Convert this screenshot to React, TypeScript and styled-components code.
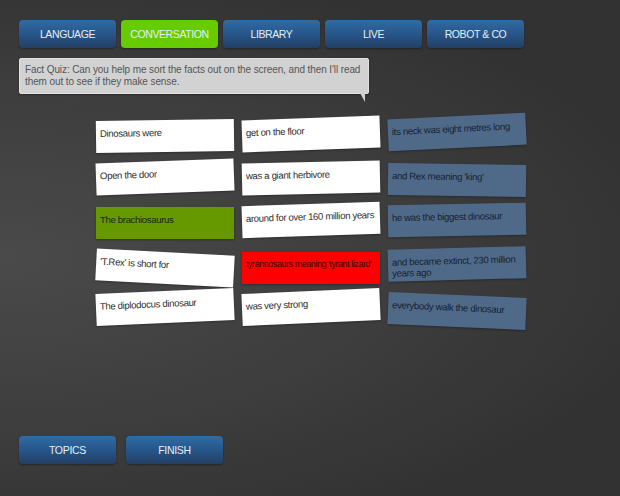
import React from "react";
import styled, { createGlobalStyle } from "styled-components";

const GlobalStyle = createGlobalStyle`
  html, body {
    margin: 0;
    padding: 0;
  }
  body {
    font-family: "Liberation Sans", Arial, sans-serif;
    background: #3a3a3a;
  }
`;

type Kind = "plain" | "right" | "wrong" | "answer";

interface ICard {
  text: string;
  kind: Kind;
  tilt: number;
  shift?: number;
}

const TABS = ["LANGUAGE", "CONVERSATION", "LIBRARY", "LIVE", "ROBOT & CO"];

// row by row, three columns
const CARDS: ICard[] = [
  { text: "Dinosaurs were", kind: "plain", tilt: -0.8, shift: 2 },
  { text: "get on the floor", kind: "plain", tilt: -2, shift: 0 },
  { text: "its neck was eight metres long", kind: "answer", tilt: -2.8, shift: -2 },

  { text: "Open the door", kind: "plain", tilt: -2, shift: 0 },
  { text: "was a giant herbivore", kind: "plain", tilt: -1.2, shift: 1 },
  { text: "and Rex meaning 'king'", kind: "answer", tilt: 0.8, shift: 3 },

  { text: "The brachiosaurus", kind: "right", tilt: 0, shift: 3 },
  { text: "around for over 160 million years", kind: "plain", tilt: -1.8, shift: 0 },
  { text: "he was the biggest dinosaur", kind: "answer", tilt: -1, shift: 0 },

  { text: "'T.Rex' is short for", kind: "plain", tilt: 3, shift: 5 },
  { text: "tyrannosaurs meaning 'tyrant lizard'", kind: "wrong", tilt: 0, shift: 5 },
  { text: "and became extinct, 230 million years ago", kind: "answer", tilt: -1.5, shift: 1 },

  { text: "The diplodocus dinosaur", kind: "plain", tilt: -2.5, shift: 1 },
  { text: "was very strong", kind: "plain", tilt: -2.5, shift: 1 },
  { text: "everybody walk the dinosaur", kind: "answer", tilt: 2.5, shift: 5 },
];

function App() {
  return (
    <>
      <GlobalStyle />
      <Page>
        <TabBar>
          {TABS.map((t) => (
            <Tab key={t} active={t === "CONVERSATION"}>
              {t}
            </Tab>
          ))}
        </TabBar>
        <Bubble>
          Fact Quiz: Can you help me sort the facts out on the screen, and then
          I'll read them out to see if they make sense.
        </Bubble>
        <Board>
          {CARDS.map((c) => (
            <Card
              key={c.text}
              kind={c.kind}
              style={{
                transform: `translateY(${c.shift ?? 0}px) rotate(${c.tilt}deg)`,
              }}
            >
              {c.text}
            </Card>
          ))}
        </Board>
        <Footer>
          <FooterButton>TOPICS</FooterButton>
          <FooterButton>FINISH</FooterButton>
        </Footer>
      </Page>
    </>
  );
}

export default App;

const Page = styled.main`
  box-sizing: border-box;
  height: 496px;
  width: 620px;
  display: flex;
  flex-direction: column;
  padding: 20px 0 0 19px;
  overflow: hidden;
  background: radial-gradient(
    ellipse 110% 60% at 0% 52%,
    #4a4a4a 0%,
    #3e3e3e 55%,
    #323232 100%
  );
`;

const TabBar = styled.nav`
  display: flex;
  gap: 5px;
`;

const Tab = styled.div<{ active?: boolean }>`
  width: 97px;
  height: 28px;
  display: flex;
  align-items: center;
  justify-content: center;
  border-radius: 4px;
  font-size: 10.5px;
  letter-spacing: -0.4px;
  color: #e6edf5;
  background: ${(p) =>
    p.active
      ? "#66cc00"
      : "linear-gradient(to bottom, #2f6ca3 0%, #27568a 50%, #223f63 100%)"};
  box-shadow: 0 1px 2px rgba(0, 0, 0, 0.35);
`;

const Bubble = styled.div`
  position: relative;
  box-sizing: border-box;
  width: 350px;
  height: 36px;
  margin-top: 10px;
  padding: 5px 5px;
  background: #d2d2d2;
  border: 1px solid #e2e2e2;
  border-radius: 2px;
  color: #555;
  font-size: 10px;
  line-height: 12px;
  letter-spacing: -0.1px;
  box-shadow: 0 1px 2px rgba(0, 0, 0, 0.3);

  &::after {
    content: "";
    position: absolute;
    top: 100%;
    right: 3px;
    width: 0;
    height: 0;
    border-left: 5px solid transparent;
    border-top: 9px solid #d2d2d2;
  }
`;

const Board = styled.section`
  display: grid;
  grid-template-columns: repeat(3, 138px);
  grid-auto-rows: 32px;
  column-gap: 8px;
  row-gap: 11px;
  margin: 24px 0 0 77px;
`;

const CARD_BG: Record<Kind, string> = {
  plain: "#ffffff",
  right: "#669900",
  wrong: "#ff0000",
  answer: "#4f6a89",
};

const CARD_FG: Record<Kind, string> = {
  plain: "#2e2e2e",
  right: "#1a260a",
  wrong: "#3a0000",
  answer: "#18222f",
};

const Card = styled.div<{ kind: Kind }>`
  box-sizing: border-box;
  height: 32px;
  padding: 7px 4px 5px;
  line-height: 11px;
  background: ${(p) => CARD_BG[p.kind]};
  color: ${(p) => CARD_FG[p.kind]};
  box-shadow: 0 1px 2px rgba(0, 0, 0, 0.3);
  font-size: ${(p) => (p.kind === "wrong" ? "9px" : "9.6px")};
  letter-spacing: ${(p) => (p.kind === "wrong" ? "-0.45px" : "-0.35px")};
  white-space: ${(p) => (p.kind === "wrong" ? "nowrap" : "normal")};
`;

const Footer = styled.footer`
  display: flex;
  gap: 10px;
  margin-top: auto;
  margin-bottom: 32px;
`;

const FooterButton = styled.div`
  width: 97px;
  height: 28px;
  display: flex;
  align-items: center;
  justify-content: center;
  border-radius: 4px;
  font-size: 10.5px;
  letter-spacing: -0.3px;
  color: #e6edf5;
  background: linear-gradient(to bottom, #2f6ca3 0%, #27568a 50%, #223f63 100%);
  box-shadow: 0 1px 2px rgba(0, 0, 0, 0.35);
`;
